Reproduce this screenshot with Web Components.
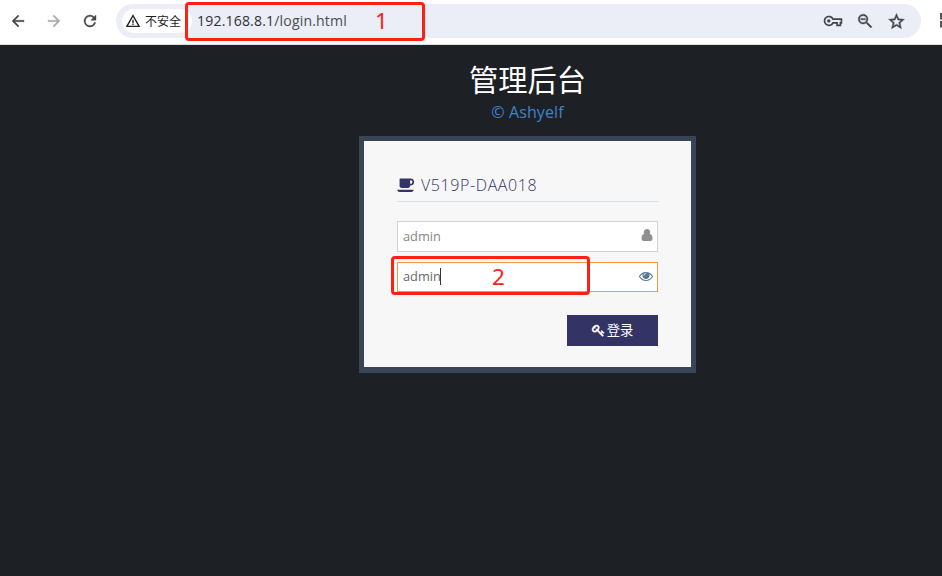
<!DOCTYPE html>
<html lang="zh-CN"><head><meta charset="utf-8"><title>管理后台</title>
<style>body{margin:0;background:#1d2024;width:942px;height:576px;overflow:hidden}</style></head><body>
<app-window></app-window>
<script>
const define=(name,html)=>customElements.define(name,class extends HTMLElement{
  constructor(){super();const t=document.createElement('template');t.innerHTML=html;this.attachShadow({mode:'open'}).append(t.content.cloneNode(true));}
});
const icons={
 back:['0 0 24 24','<path stroke="currentColor" stroke-width=".5" d="M20 11H7.8l5.6-5.6L12 4l-8 8 8 8 1.4-1.4L7.8 13H20z"/>'],
 forward:['0 0 24 24','<path stroke="currentColor" stroke-width=".5" d="M4 11h12.2l-5.6-5.6L12 4l8 8-8 8-1.4-1.4 5.6-5.6H4z"/>'],
 reload:['0 0 24 24','<path stroke="currentColor" stroke-width=".5" d="M17.65 6.35A8 8 0 1 0 19.73 14h-2.08A6 6 0 1 1 12 6c1.66 0 3.14.69 4.22 1.78L13 11h7V4z"/>'],
 warning:['0 0 24 24','<path d="M1 21h22L12 2zm3.500-2L12 6l7.500 13zM11 16.200h2v1.800h-2zm0-6h2v5h-2z"/>'],
 passkey:['0 0 20 12','<g fill="none" stroke="currentColor" stroke-width="1.7"><path d="M10 4.1h8.4v3.7h-1v2.5h-3.3V7.800H10A4.45 4.45 0 1 1 10 4.1z"/></g><circle cx="5.8" cy="5.9" r="1.7"/>'],
 zoom:['0 0 24 24','<path stroke="currentColor" stroke-width=".5" d="M15.500 14h-.8l-.3-.3A6.500 6.500 0 1 0 13.7 14.4l.3.3v.8l5.800 5.800 1.500-1.500zm-6 0a4.500 4.500 0 1 1 0-9 4.500 4.500 0 0 1 0 9zM6.500 8.600h6v1.800h-6z"/>'],
 star:['0 0 24 24','<path stroke="currentColor" stroke-width=".6" d="m22 9.24-7.19-.62L12 2 9.19 8.63 2 9.24l5.46 4.73L5.82 21 12 17.27 18.18 21l-1.63-7.03zM12 15.4l-3.76 2.27 1-4.28-3.32-2.88 4.38-.38L12 6.1l1.71 4.04 4.38.38-3.32 2.88 1 4.28z"/>'],
 extensions:['0 0 16 16','<path fill="none" stroke="currentColor" stroke-width="1.8" d="M7 1H3v4.500h4M7 9H3v4.500h4"/>'],
 coffee:['0 0 1920 1536','<path d="M1664 448q0-80-56-136t-136-56h-64v384h64q80 0 136-56t56-136zM0 1280h1792q0 106-75 181t-181 75H256q-106 0-181-75T0 1280zM1856 448q0 159-112.500 271.500T1472 832h-64v32q0 92-66 158t-158 66H480q-92 0-158-66t-66-158V128q0-26 19-45t45-19h1152q159 0 271.500 112.500T1856 448z"/>'],
 user:['0 0 1280 1408','<path d="M1280 1137q0 109-62.500 187T1067 1402H213q-88 0-150.500-78T0 1137q0-85 8.500-160.500T40 825t58.500-131 89-86T320 574q131 128 320 128t320-128q76 0 133 34t89 86 58.500 131 31.500 151.500 8 160.500zM1024 384q0 159-112.500 271.500T640 768 368.500 655.500 256 384t112.500-271.500T640 0t271.500 112.500T1024 384z"/>'],
 eye:['0 0 1792 1152','<path d="M1664 576q-152-236-381-353 61 104 61 225 0 185-131.500 316.500T896 896 579.500 764.500 448 448q0-121 61-225-229 117-381 353 133 205 333.500 326.500T896 1024t434.500-121.500T1664 576zM944 192q0-20-14-34t-34-14q-125 0-214.500 89.500T592 448q0 20 14 34t34 14 34-14 14-34q0-86 61-147t147-61q20 0 34-14t14-34zM1792 576q0 34-20 69-140 230-376.500 368.500T896 1152t-499.500-139T20 645Q0 610 0 576t20-69q140-229 376.500-368T896 0t499.500 139T1772 507q20 35 20 69z"/>'],
 key:['0 0 1664 1664','<path stroke="currentColor" stroke-width="55" d="M832 512q0-80-56-136t-136-56-136 56-56 136q0 42 19 83-41-19-83-19-80 0-136 56t-56 136 56 136 136 56 136-56 56-136q0-42-19-83 41 19 83 19 80 0 136-56t56-136zM1683 1216q0 17-49 66t-66 49q-9 0-28.500-16t-36.500-33-38.500-40-24.500-26l-96 96 220 220q28 28 28 68 0 42-39 81t-81 39q-40 0-68-28L733 1021q-176 131-365 131-163 0-265.500-102.500T0 784q0-160 95-313t248-248 313-95q163 0 265.500 102.500T1024 496q0 189-131 365l355 355 96-96q-3-3-26-24.500t-40-38.500-33-36.500-16-28.500q0-17 49-66t66-49q13 0 23 10 6 6 46 44.500t82 79.500 86.500 86 73 78 28.500 41z"/>']};
customElements.define('ui-icon',class extends HTMLElement{connectedCallback(){
 const [box,path]=icons[this.getAttribute('name')];this.attachShadow({mode:'open'}).innerHTML='<style>:host{display:block;flex:none;width:20px;height:20px}svg{display:block;width:100%;height:100%;overflow:visible}</style><svg viewBox="'+box+'" fill="currentColor">'+path+'</svg>';}});
define('mark-box',`<style>:host{position:absolute;box-sizing:border-box;border:3px solid #fd2114;border-radius:4px;color:#fd2114;font:22.5px/30px "Noto Sans","Noto Sans CJK SC",sans-serif;pointer-events:none}</style><slot></slot>`);
define('address-bar',`<style>
:host{position:relative;box-sizing:border-box;width:805px;height:34px;border-radius:17px;background:#ebedf7;display:flex;align-items:center;padding-left:6px;color:#454649}
.chip{box-sizing:border-box;width:70px;height:24px;border-radius:12px;background:#fff;display:flex;align-items:center;padding-left:3px;gap:4px;font:12px/24px "Noto Sans CJK SC",sans-serif;color:#222;white-space:nowrap}
.chip ui-icon{width:16px;height:16px;margin-top:-1px}.url{margin-left:5px;width:500px;font:14.1px/24px "Open Sans","Noto Sans",sans-serif;letter-spacing:.15px;color:#4c4d51}.url b{font-weight:400;color:#303135}
.tools{display:flex;align-items:center;margin-left:auto;padding-right:15px;gap:13px}.key{width:20px;height:12px}.zoom{width:18px;height:18px}.star{width:19px;height:19px}
mark-box{left:69px;top:-2px;width:240px;height:39px}mark-box span{display:block;padding:1px 0 0 187px}
</style><div class="chip"><ui-icon name="warning"></ui-icon><span>不安全</span></div><div class="url"><b>192.168.8.1</b>/login.html</div><div class="tools"><ui-icon class="key" name="passkey"></ui-icon><ui-icon class="zoom" name="zoom"></ui-icon><ui-icon class="star" name="star"></ui-icon></div><mark-box><span>1</span></mark-box>`);
define('browser-toolbar',`<style>:host{display:flex;box-sizing:border-box;width:942px;height:45px;background:#fff;border-bottom:1px solid #dfe1e5;padding:4px 0 0 9px;overflow:hidden;color:#454649}
nav{display:flex;gap:18px;width:107px;height:34px;align-items:center}nav ui-icon{width:18px;height:18px}.off{color:#aaa}.ext{width:16px;height:16px;margin:9px -16px 0 17px}</style><nav><ui-icon name="back"></ui-icon><ui-icon class="off" name="forward"></ui-icon><ui-icon name="reload"></ui-icon></nav><address-bar></address-bar><ui-icon class="ext" name="extensions"></ui-icon>`);
define('form-field',`<style>:host{display:flex;box-sizing:border-box;position:relative;height:31px;border:1px solid #d3d3d3;background:#fff;padding:0 4px 0 5px;align-items:center;justify-content:space-between;font:12.8px/28px "Open Sans","Noto Sans",sans-serif;color:#858585}:host([active]){height:30px;border-color:#f59942;color:#696969;padding-bottom:2px}:host([active]) .value{border-right:1px solid #333;margin-right:-1px;width:36.500px}.value{line-height:17px}</style><span class="value"><slot></slot></span><slot name="icon"></slot><slot name="mark"></slot>`);
define('login-button',`<style>:host{display:block}button{display:flex;align-items:center;justify-content:center;gap:3px;width:91px;height:31px;border:0;padding:0 0 1px;background:#333366;color:#fff;font:13.3px/28px "Noto Sans CJK SC",sans-serif}ui-icon{width:12px;height:12px}</style><button type="button"><ui-icon name="key"></ui-icon><slot></slot></button>`);
define('login-card',`<style>:host{display:block;box-sizing:border-box;width:337px;height:237px;border:5px solid #394557;border-bottom-width:6px;background:#f7f7f7;padding:29px 33px 0;font-family:"Open Sans","Noto Sans",sans-serif}
h2{display:flex;align-items:center;box-sizing:border-box;height:32px;margin:0 0 19px;border-bottom:1px solid #d8e1e8;font:300 16px/29px "Open Sans","Noto Sans",sans-serif;letter-spacing:.6px;color:#333366;gap:6px}h2 ui-icon{width:18px;height:14px;margin:-1px 0 0 -.5px}h2 span{margin-left:.5px}
.active{margin-top:10px}.user{width:12px;height:12px;color:#909090;margin:0 0 3px 0}.eye{width:14px;height:9px;color:#587792}login-button{margin:23px 0 0 170px}mark-box{left:-7px;top:-7px;width:199px;height:39px}mark-box span{display:block;padding:3px 0 0 98px}</style>
<h2><ui-icon name="coffee"></ui-icon><span>V519P-DAA018</span></h2><form-field>admin<ui-icon class="user" slot="icon" name="user"></ui-icon></form-field><form-field class="active" active>admin<ui-icon class="eye" slot="icon" name="eye"></ui-icon><mark-box slot="mark"><span>2</span></mark-box></form-field><login-button>登录</login-button>`);
define('login-page',`<style>:host{display:flex;flex-direction:column;align-items:center;width:942px;height:531px;box-sizing:border-box;padding:12px 0 0 113px;background:#1d2024}h1{margin:0;height:44px;font:400 29.3px/42px "Noto Sans CJK SC",sans-serif;color:#fff}p{margin:0 0 13px;height:22px;font:16px/22px "Open Sans","Noto Sans",sans-serif;letter-spacing:.1px;color:#4084ca}</style><h1>管理后台</h1><p>© Ashyelf</p><login-card></login-card>`);
define('app-window',`<style>:host{display:block}</style><browser-toolbar></browser-toolbar><login-page></login-page>`);
</script></body></html>
